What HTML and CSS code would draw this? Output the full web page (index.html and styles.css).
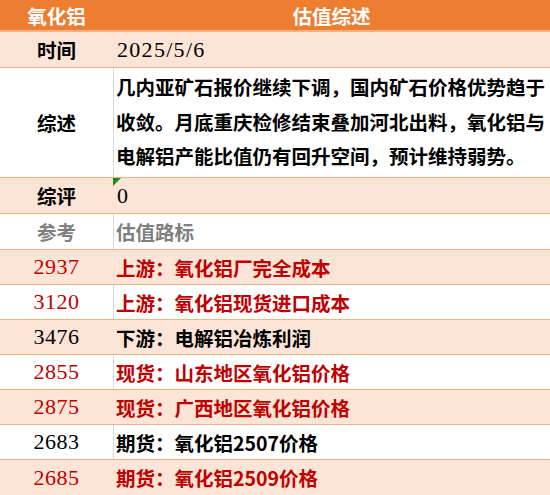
FILE: index.html
```html
<!DOCTYPE html>
<html lang="zh-CN">
<head>
<meta charset="utf-8">
<title>氧化铝 估值综述</title>
<link rel="stylesheet" href="styles.css">
</head>
<body>
<div class="sheet">
  <div class="row head">
    <div class="lab">氧化铝</div>
    <div class="val center">估值综述</div>
  </div>
  <div class="row peach h36">
    <div class="lab">时间</div>
    <div class="val num date">2025/5/6</div>
  </div>
  <div class="row white summary">
    <div class="lab">综述</div>
    <div class="val text">几内亚矿石报价继续下调，国内矿石价格优势趋于收敛。月底重庆检修结束叠加河北出料，氧化铝与电解铝产能比值仍有回升空间，预计维持弱势。</div>
  </div>
  <div class="row peach h36">
    <div class="lab">综评</div>
    <div class="val num flagged"><span class="flag"></span>0</div>
  </div>
  <div class="row white h36 gray">
    <div class="lab">参考</div>
    <div class="val">估值路标</div>
  </div>
  <div class="row peach red">
    <div class="lab num">2937</div>
    <div class="val">上游：氧化铝厂完全成本</div>
  </div>
  <div class="row white red">
    <div class="lab num">3120</div>
    <div class="val">上游：氧化铝现货进口成本</div>
  </div>
  <div class="row peach">
    <div class="lab num">3476</div>
    <div class="val">下游：电解铝冶炼利润</div>
  </div>
  <div class="row white red">
    <div class="lab num">2855</div>
    <div class="val">现货：山东地区氧化铝价格</div>
  </div>
  <div class="row peach red">
    <div class="lab num">2875</div>
    <div class="val">现货：广西地区氧化铝价格</div>
  </div>
  <div class="row white">
    <div class="lab num">2683</div>
    <div class="val">期货：氧化铝2507价格</div>
  </div>
  <div class="row peach red last">
    <div class="lab num">2685</div>
    <div class="val">期货：氧化铝2509价格</div>
  </div>
</div>
</body>
</html>
```

FILE: styles.css
```css
html, body {
  margin: 0;
  padding: 0;
  background: #ffffff;
}

.sheet {
  width: 550px;
  height: 495px;
  overflow: hidden;
  font-family: "Noto Sans CJK SC", "Noto Sans", sans-serif;
  font-weight: 700;
  font-size: 19.5px;
  color: #000000;
}

.row {
  display: grid;
  grid-template-columns: 113px 437px;
  height: 35px;
  box-sizing: border-box;
  border-bottom: 1px solid #f4b183;
}

.row.h36 { height: 36px; }

.lab {
  display: flex;
  align-items: center;
  justify-content: center;
}

.val {
  display: flex;
  align-items: center;
  padding-left: 3px;
  position: relative;
}

.val.center {
  justify-content: center;
  padding-left: 0;
}

.head {
  height: 32px;
  background: #ed7d31;
  color: #ffffff;
  border-bottom: 2px solid #f4b183;
}

.peach { background: #fce4d6; }

.white { background: #ffffff; }
.white .val { border-left: 1px solid #d9d9d9; }
.white .val { padding-left: 2px; }

.red { color: #c00000; }
.gray { color: #7f7f7f; }

.num {
  font-family: "Liberation Serif", "Times New Roman", serif;
  font-weight: 400;
  font-size: 22px;
  letter-spacing: 0.5px;
}

.date {
  letter-spacing: 1.3px;
  padding-left: 4px;
}

.summary {
  height: 110px;
}

.summary .text {
  display: block;
  line-height: 34.5px;
  padding-top: 2px;
  padding-left: 2px;
}

.flagged { padding-left: 4px; }

.flag {
  position: absolute;
  left: 0;
  top: 0;
  width: 0;
  height: 0;
  border-top: 8px solid #1f8a1f;
  border-right: 8px solid transparent;
}

.last { border-bottom: none; }
```
